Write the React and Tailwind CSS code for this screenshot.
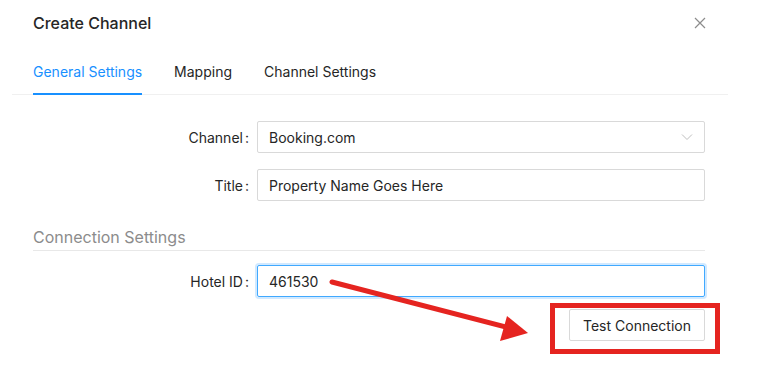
import { useState } from 'react';

// Antd-style "Create Channel" modal with a red annotation arrow + box.
const FONT = { fontFamily: 'Inter, "Liberation Sans", Arial, sans-serif' };

function Field({ label, children }) {
  return (
    <div className="flex items-center">
      <label className="w-[257px] shrink-0 pr-[8px] text-right text-[14px] text-[#262626]">
        {label}<span className="ml-[2px]">:</span>
      </label>
      {children}
    </div>
  );
}

export default function App() {
  const [tab, setTab] = useState(0);
  const tabs = ['General Settings', 'Mapping', 'Channel Settings'];

  return (
    <div className="relative h-[392px] w-[758px] overflow-hidden bg-white" style={FONT}>
      {/* header */}
      <div className="flex h-[45px] items-center justify-between pl-[33px] pr-[52px]">
        <h2 className="text-[16px] font-medium text-[#262626]">Create Channel</h2>
        <svg width="12" height="12" viewBox="0 0 12 12" className="text-[#8c8c8c]">
          <path d="M1 1 L11 11 M11 1 L1 11" stroke="currentColor" strokeWidth="1.2" fill="none" />
        </svg>
      </div>

      {/* tabs */}
      <div className="mx-[12px] mr-[30px] flex gap-[32px] border-b border-[#f0f0f0] pl-[21px] pt-[7px]">
        {tabs.map((t, i) => (
          <button
            key={t}
            onClick={() => setTab(i)}
            className={`relative pb-[12px] pt-[10px] text-[14px] leading-[20px] ${tab === i ? 'text-[#1890ff]' : 'text-[#262626]'}`}
          >
            {t}
            {tab === i && <span className="absolute -bottom-px left-0 h-[2px] w-full bg-[#1890ff]" />}
          </button>
        ))}
      </div>

      {/* form */}
      <div className="flex w-[705px] flex-col pt-[26px]">
        <div className="flex flex-col gap-[16px]">
          <Field label="Channel">
            <div className="flex h-[32px] flex-1 items-center justify-between rounded-[2px] border border-[#d9d9d9] pl-[11px] pr-[11px] text-[14px] text-[#262626]">
              <span>Booking.com</span>
              <svg width="12" height="8" viewBox="0 0 12 8" className="text-[#bfbfbf]">
                <path d="M1 1.5 L6 6.5 L11 1.5" stroke="currentColor" strokeWidth="1" fill="none" />
              </svg>
            </div>
          </Field>
          <Field label="Title">
            <input
              defaultValue="Property Name Goes Here"
              className="h-[32px] flex-1 rounded-[2px] border border-[#d9d9d9] px-[11px] text-[14px] text-[#262626] outline-none"
            />
          </Field>
        </div>

        <div className="ml-[33px] mt-[25px] border-b border-[#e8e8e8] pb-[2px] text-[16px] leading-[22px] text-[#8c8c8c]">
          Connection Settings
        </div>

        <div className="mt-[14px]">
          <Field label="Hotel ID">
            <input
              defaultValue="461530"
              className="h-[32px] flex-1 rounded-[2px] border border-[#40a9ff] px-[11px] text-[14px] text-[#262626] shadow-[0_0_0_2px_rgba(24,144,255,0.2)] outline-none"
            />
          </Field>
        </div>

        <div className="mt-[12px] flex justify-end">
          <button className="h-[32px] w-[136px] rounded-[2px] border border-[#d9d9d9] bg-white text-[14px] text-[#262626]">
            Test Connection
          </button>
        </div>
      </div>

      {/* annotation overlay */}
      <div className="absolute left-[550px] top-[303px] h-[51px] w-[170px] border-[5px] border-[#e52420]" />
      <svg className="absolute left-0 top-0" width="758" height="392" viewBox="0 0 758 392">
        <line x1="332" y1="282" x2="510" y2="328" stroke="#e52420" strokeWidth="5" strokeLinecap="round" />
        <polygon points="528,333 507,316 500,341" fill="#e52420" />
      </svg>
    </div>
  );
}
